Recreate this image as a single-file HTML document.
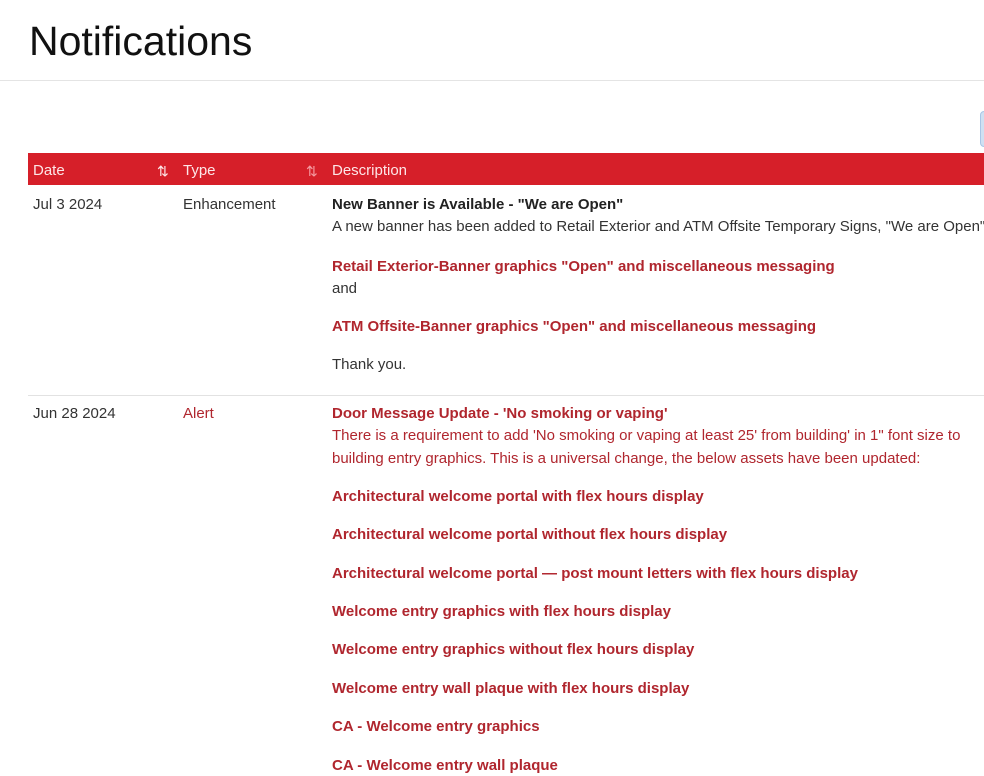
<!DOCTYPE html>
<html><head><style>
body{margin:0;width:984px;height:775px;overflow:hidden;background:#fff;font-family:"Liberation Sans",sans-serif;position:relative;color:#333}
.a{position:absolute;white-space:nowrap;font-size:15px;line-height:20px}
.b{font-weight:bold;font-size:15px}
.r{color:#b0262e}
.k{color:#222}
h1{position:absolute;left:29px;top:17px;margin:0;font-weight:normal;font-size:41px;color:#111;line-height:48px}
</style></head><body>
<h1>Notifications</h1>
<div style="position:absolute;left:0;top:80px;width:984px;height:1px;background:#e4e4e4"></div>
<div style="position:absolute;left:980px;top:111px;width:8px;height:34px;border-radius:4px;background:#cfe0f2;border:1px solid #a9c6e6"></div>
<div style="position:absolute;left:28px;top:153px;width:956px;height:32px;background:#d61f29"></div>
<div class="a" style="left:33px;top:161px;color:#fde6e7">Date</div>
<div class="a" style="left:157px;top:161px;color:#fde6e7;font-size:14px">⇅</div>
<div class="a" style="left:183px;top:161px;color:#fde6e7">Type</div>
<div class="a" style="left:306px;top:161px;color:#f59aa0;font-size:14px">⇅</div>
<div class="a" style="left:332px;top:161px;color:#fde6e7">Description</div>

<div class="a" style="left:33px;top:195px">Jul 3 2024</div>
<div class="a" style="left:183px;top:195px">Enhancement</div>
<div class="a b k" style="left:332px;top:195px">New Banner is Available - "We are Open"</div>
<div class="a" style="left:332px;top:217px">A new banner has been added to Retail Exterior and ATM Offsite Temporary Signs, "We are Open"</div>
<div class="a b r" style="left:332px;top:257px">Retail Exterior-Banner graphics "Open" and miscellaneous messaging</div>
<div class="a" style="left:332px;top:279px">and</div>
<div class="a b r" style="left:332px;top:317px">ATM Offsite-Banner graphics "Open" and miscellaneous messaging</div>
<div class="a" style="left:332px;top:355px">Thank you.</div>

<div style="position:absolute;left:28px;top:395px;width:956px;height:1px;background:#e2e2e2"></div>
<div class="a" style="left:33px;top:404px">Jun 28 2024</div>
<div class="a r" style="left:183px;top:404px">Alert</div>
<div class="a b r" style="left:332px;top:404px">Door Message Update - 'No smoking or vaping'</div>
<div class="a r" style="left:332px;top:426px">There is a requirement to add 'No smoking or vaping at least 25' from building' in 1" font size to</div>
<div class="a r" style="left:332px;top:449px">building entry graphics. This is a universal change, the below assets have been updated:</div>
<div class="a b r" style="left:332px;top:487px">Architectural welcome portal with flex hours display</div>
<div class="a b r" style="left:332px;top:525px">Architectural welcome portal without flex hours display</div>
<div class="a b r" style="left:332px;top:564px">Architectural welcome portal — post mount letters with flex hours display</div>
<div class="a b r" style="left:332px;top:602px">Welcome entry graphics with flex hours display</div>
<div class="a b r" style="left:332px;top:640px">Welcome entry graphics without flex hours display</div>
<div class="a b r" style="left:332px;top:679px">Welcome entry wall plaque with flex hours display</div>
<div class="a b r" style="left:332px;top:717px">CA - Welcome entry graphics</div>
<div class="a b r" style="left:332px;top:756px">CA - Welcome entry wall plaque</div>
</body></html>
